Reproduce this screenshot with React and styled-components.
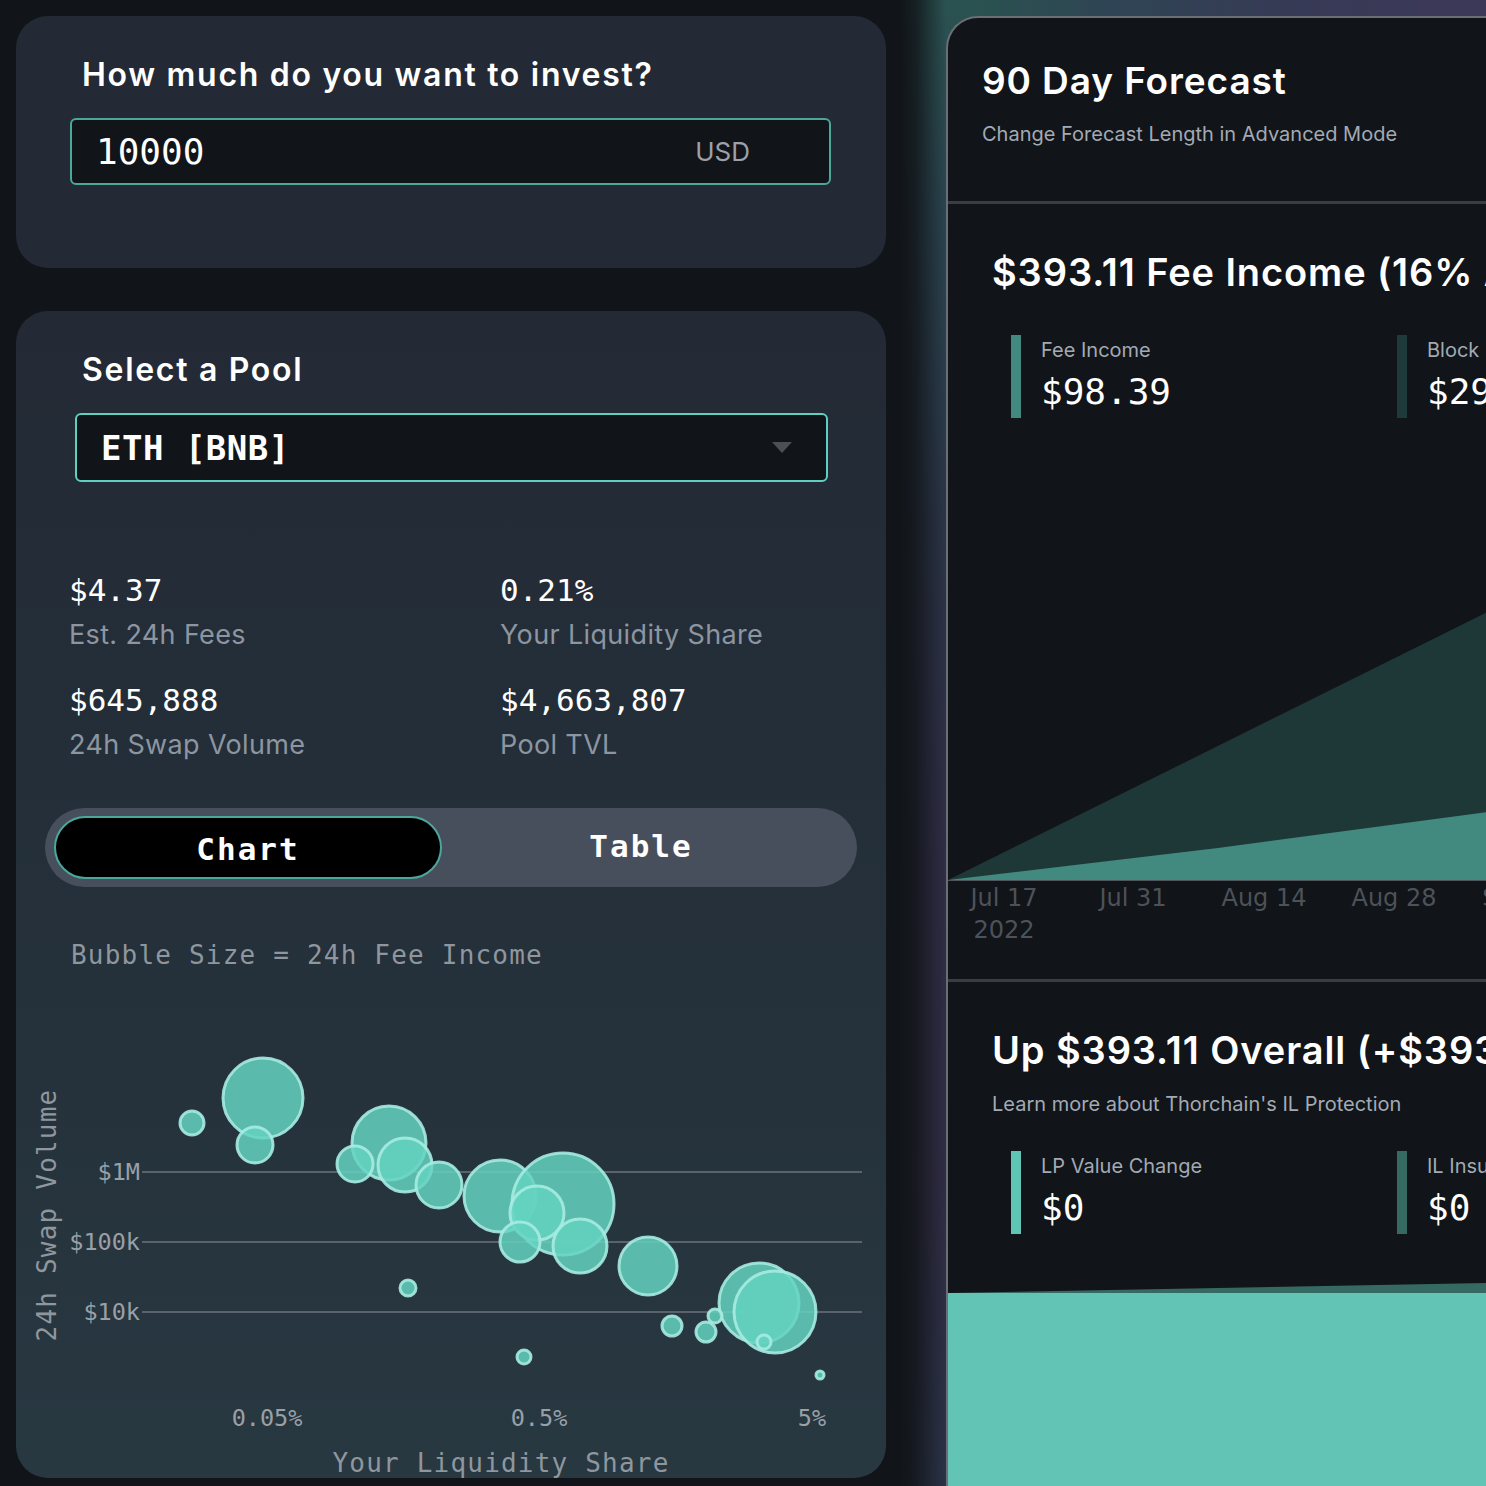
import React from "react";
import styled, { createGlobalStyle } from "styled-components";

const GlobalStyle = createGlobalStyle`
  html, body {
    margin: 0;
    padding: 0;
    background: #111418;
    overflow: hidden;
  }
  body {
    font-family: Inter, "Noto Sans", sans-serif;
    color: #ffffff;
  }
  * {
    box-sizing: border-box;
  }
`;

const mono = `"DejaVu Sans Mono", "Liberation Mono", monospace`;

const Page = styled.div`
  display: flex;
  width: 1486px;
  height: 1486px;
  overflow: hidden;
  background: #111418;
`;

const LeftColumn = styled.div`
  flex: 0 0 870px;
  margin: 16px 0 0 16px;
  display: flex;
  flex-direction: column;
  gap: 43px;
`;

const Card = styled.section`
  background: ${(p) =>
    p.$fade
      ? "linear-gradient(180deg, #232a35 0%, #24303a 55%, #283841 100%)"
      : "#232a35"};
  border-radius: 32px;
  padding: 41px 0 ${(p) => p.$pb || 0}px;
`;

const Heading = styled.h2`
  margin: 0 0 0 66px;
  font: 600 32px/36px Inter, sans-serif;
  letter-spacing: 1.7px;
  color: #ffffff;
`;

const Field = styled.div`
  margin: 25px ${(p) => p.$mr}px 0 ${(p) => p.$ml}px;
  height: ${(p) => p.$h}px;
  border: 2px solid ${(p) => p.$border};
  border-radius: 6px;
  background: #111418;
  display: flex;
  align-items: center;
  justify-content: space-between;
  padding: 0 ${(p) => p.$pr}px 0 24px;
`;

const FieldValue = styled.span`
  font: ${(p) => (p.$bold ? 700 : 400)} ${(p) => p.$size}px/1 ${mono};
  color: #ffffff;
  letter-spacing: ${(p) => p.$ls || 0}px;
`;

const Unit = styled.span`
  font: 400 26px/1 Inter, sans-serif;
  color: #9aa1ab;
`;

const Caret = styled.span`
  width: 0;
  height: 0;
  border-left: 10px solid transparent;
  border-right: 10px solid transparent;
  border-top: 11px solid #4b5057;
`;

const StatsGrid = styled.div`
  margin: 88px 0 0 53px;
  display: grid;
  grid-template-columns: 431px 1fr;
  row-gap: 27px;
`;

const StatValue = styled.div`
  font: 400 31px/40px ${mono};
  color: #ffffff;
`;

const StatLabel = styled.div`
  margin-top: 7px;
  font: 400 27px/36px Inter, sans-serif;
  letter-spacing: 0.35px;
  color: #8d95a0;
`;

const Toggle = styled.div`
  margin: 45px 29px 0;
  height: 79px;
  border-radius: 40px;
  background: #484f5c;
  padding: 8px 9px;
  display: grid;
  grid-template-columns: 388px 1fr;
`;

const ToggleOption = styled.button`
  border: 2px solid ${(p) => (p.$active ? "#4aa89b" : "transparent")};
  background: ${(p) => (p.$active ? "#000000" : "transparent")};
  border-radius: 32px;
  color: #ffffff;
  font: 700 31px/1 ${mono};
  letter-spacing: 2px;
  padding: ${(p) => (p.$active ? "4px 0 0" : "0 8px 2px 0")};
  cursor: pointer;
`;

const ChartNote = styled.div`
  margin: 52px 0 0 55px;
  font: 400 26px/32px ${mono};
  letter-spacing: 1.2px;
  color: #8f969e;
`;

const BubbleSvg = styled.svg`
  display: block;
  margin-top: 29px;
`;

const RightColumn = styled.div`
  flex: 0 0 930px;
  padding: 16px 0 0 60px;
  background:
    linear-gradient(90deg, #111418 0px, #111418 14px, rgba(17, 20, 24, 0.8) 30px, rgba(17, 20, 24, 0.3) 48px, rgba(17, 20, 24, 0) 60px),
    linear-gradient(90deg, #2a5250 0px, #2a5250 90px, #2f4554 220px, #363a55 400px, #3c3858 560px) 0 0 / 100% 16px no-repeat,
    linear-gradient(180deg, #2a5250 0%, #2a4550 14%, #2b3548 35%, #302d46 58%, #312c45 80%, #2a3448 100%);
`;

const Panel = styled.div`
  width: 870px;
  height: 1470px;
  background: #111418;
  border-top: 2px solid #6a6e76;
  border-left: 2px solid #6a6e76;
  border-top-left-radius: 32px;
  overflow: hidden;
`;

const Header = styled.header`
  padding: 41px 34px 55px;
`;

const Title = styled.h1`
  margin: 0;
  font: 600 ${(p) => p.$size || 37}px/44px Inter, sans-serif;
  letter-spacing: 0.9px;
  white-space: nowrap;
  color: #ffffff;
`;

const Subtitle = styled.p`
  margin: ${(p) => p.$mt}px 0 0;
  font: 400 20px/24px Inter, sans-serif;
  color: #a2aab4;
  white-space: nowrap;
`;

const Divider = styled.div`
  height: 3px;
  background: #363e48;
`;

const Section = styled.section`
  padding-top: 46px;
`;

const SectionText = styled.div`
  padding-left: 44px;
`;

const ForecastStats = styled.div`
  margin: ${(p) => p.$mt}px 0 0 63px;
  display: grid;
  grid-template-columns: 386px 386px;
`;

const ForecastStat = styled.div`
  display: flex;
  height: 83px;
`;

const StatBar = styled.span`
  flex: 0 0 10px;
  background: ${(p) => p.$color};
`;

const StatBody = styled.div`
  padding: 3px 0 0 20px;
  white-space: nowrap;
`;

const ForecastLabel = styled.div`
  font: 400 20px/24px Inter, sans-serif;
  color: #a2aab4;
`;

const ForecastValue = styled.div`
  margin-top: 8px;
  font: 400 36px/44px ${mono};
  color: #ffffff;
`;

const ChartSvg = styled.svg`
  display: block;
`;

const bubbles = [
  [263, 1098, 40],
  [192, 1123, 12],
  [255, 1145, 18],
  [389, 1143, 37],
  [355, 1164, 18],
  [405, 1165, 27],
  [439, 1185, 23],
  [500, 1196, 36],
  [563, 1204, 51],
  [537, 1213, 27],
  [520, 1242, 20],
  [580, 1246, 27],
  [648, 1266, 29],
  [408, 1288, 8],
  [759, 1303, 40],
  [775, 1312, 41],
  [672, 1326, 10],
  [706, 1332, 10],
  [715, 1316, 7],
  [764, 1342, 7],
  [524, 1357, 7],
  [820, 1375, 4],
];

const yTicks = [
  ["$1M", 172],
  ["$100k", 242],
  ["$10k", 312],
];

const xTicks = [
  ["0.05%", 251],
  ["0.5%", 523],
  ["5%", 796],
];

function BubbleChart() {
  return (
    <BubbleSvg width="870" height="478" viewBox="0 0 870 478">
      {yTicks.map(([label, y]) => (
        <g key={label}>
          <line x1="126" x2="846" y1={y} y2={y} stroke="#5a626c" strokeWidth="2" />
          <text
            x="124"
            y={y + 8}
            textAnchor="end"
            fill="#9aa0a8"
            fontFamily={mono}
            fontSize="23.5"
          >
            {label}
          </text>
        </g>
      ))}
      {bubbles.map(([x, y, r], i) => (
        <circle
          key={i}
          cx={x - 16}
          cy={y - 1000}
          r={r}
          fill="#64d2c0"
          fillOpacity="0.85"
          stroke="#a7ebe1"
          strokeOpacity="0.9"
          strokeWidth="3"
        />
      ))}
      {xTicks.map(([label, x]) => (
        <text
          key={label}
          x={x}
          y="426"
          textAnchor="middle"
          fill="#9aa0a8"
          fontFamily={mono}
          fontSize="23.5"
        >
          {label}
        </text>
      ))}
      <text
        x="485"
        y="472"
        textAnchor="middle"
        fill="#8f969e"
        fontFamily={mono}
        fontSize="26"
        letterSpacing="1.2"
      >
        Your Liquidity Share
      </text>
      <text
        transform="translate(40 215) rotate(-90)"
        textAnchor="middle"
        fill="#8f969e"
        fontFamily={mono}
        fontSize="26"
        letterSpacing="1.2"
      >
        24h Swap Volume
      </text>
    </BubbleSvg>
  );
}

const dates = [
  ["Jul 17", 56],
  ["Jul 31", 185],
  ["Aug 14", 316],
  ["Aug 28", 446],
  ["Sep 11", 576],
  ["Sep 25", 706],
  ["Oct 9", 836],
];

function FeeChart() {
  return (
    <ChartSvg width="870" height="561" viewBox="0 0 870 561">
      <polygon points="0,462 870,30 870,462" fill="#1e3838" />
      <polygon points="0,462 270,430 540,394 870,352 870,462" fill="#428a7f" />
      <line x1="0" x2="870" y1="462.5" y2="462.5" stroke="#50555c" strokeWidth="1" />
      {dates.map(([label, x]) => (
        <text
          key={label}
          x={x}
          y="488"
          textAnchor="middle"
          fill="#4d5259"
          fontFamily={`"DejaVu Sans", Verdana, sans-serif`}
          fontSize="24"
        >
          {label}
        </text>
      ))}
      <text
        x="56"
        y="520"
        textAnchor="middle"
        fill="#4d5259"
        fontFamily={`"DejaVu Sans", Verdana, sans-serif`}
        fontSize="24"
      >
        2022
      </text>
    </ChartSvg>
  );
}

function ValueChart() {
  return (
    <ChartSvg width="870" height="260" viewBox="0 0 870 260">
      <polygon points="0,59 870,43 870,260 0,260" fill="#356a63" />
      <polygon points="0,59 870,59 870,260 0,260" fill="#61c4b5" />
    </ChartSvg>
  );
}

export default function App() {
  return (
    <Page>
      <GlobalStyle />
      <LeftColumn>
        <Card $pb={83}>
          <Heading>How much do you want to invest?</Heading>
          <Field $ml={54} $mr={55} $h={67} $pr={79} $border="#4aa89b">
            <FieldValue $size={36}>10000</FieldValue>
            <Unit>USD</Unit>
          </Field>
        </Card>

        <Card $fade>
          <Heading>Select a Pool</Heading>
          <Field $ml={59} $mr={58} $h={69} $pr={34} $border="#5fd0c0">
            <FieldValue $size={34} $bold $ls={0.5}>
              ETH [BNB]
            </FieldValue>
            <Caret />
          </Field>

          <StatsGrid>
            <div>
              <StatValue>$4.37</StatValue>
              <StatLabel>Est. 24h Fees</StatLabel>
            </div>
            <div>
              <StatValue>0.21%</StatValue>
              <StatLabel>Your Liquidity Share</StatLabel>
            </div>
            <div>
              <StatValue>$645,888</StatValue>
              <StatLabel>24h Swap Volume</StatLabel>
            </div>
            <div>
              <StatValue>$4,663,807</StatValue>
              <StatLabel>Pool TVL</StatLabel>
            </div>
          </StatsGrid>

          <Toggle>
            <ToggleOption $active>Chart</ToggleOption>
            <ToggleOption>Table</ToggleOption>
          </Toggle>

          <ChartNote>Bubble Size = 24h Fee Income</ChartNote>
          <BubbleChart />
        </Card>
      </LeftColumn>

      <RightColumn>
        <Panel>
          <Header>
            <Title>90 Day Forecast</Title>
            <Subtitle $mt={19}>Change Forecast Length in Advanced Mode</Subtitle>
          </Header>
          <Divider />

          <Section>
            <SectionText>
              <Title $size={38}>$393.11 Fee Income (16% APR)</Title>
            </SectionText>
            <ForecastStats $mt={41}>
              <ForecastStat>
                <StatBar $color="#428a7f" />
                <StatBody>
                  <ForecastLabel>Fee Income</ForecastLabel>
                  <ForecastValue>$98.39</ForecastValue>
                </StatBody>
              </ForecastStat>
              <ForecastStat>
                <StatBar $color="#1f3a3a" />
                <StatBody>
                  <ForecastLabel>Block Rewards</ForecastLabel>
                  <ForecastValue>$294.72</ForecastValue>
                </StatBody>
              </ForecastStat>
            </ForecastStats>
            <FeeChart />
          </Section>
          <Divider />

          <Section>
            <SectionText>
              <Title $size={38}>Up $393.11 Overall (+$393.11)</Title>
              <Subtitle $mt={20}>Learn more about Thorchain's IL Protection</Subtitle>
            </SectionText>
            <ForecastStats $mt={35}>
              <ForecastStat>
                <StatBar $color="#60c4b5" />
                <StatBody>
                  <ForecastLabel>LP Value Change</ForecastLabel>
                  <ForecastValue>$0</ForecastValue>
                </StatBody>
              </ForecastStat>
              <ForecastStat>
                <StatBar $color="#356a63" />
                <StatBody>
                  <ForecastLabel>IL Insurance</ForecastLabel>
                  <ForecastValue>$0</ForecastValue>
                </StatBody>
              </ForecastStat>
            </ForecastStats>
            <ValueChart />
          </Section>
        </Panel>
      </RightColumn>
    </Page>
  );
}
